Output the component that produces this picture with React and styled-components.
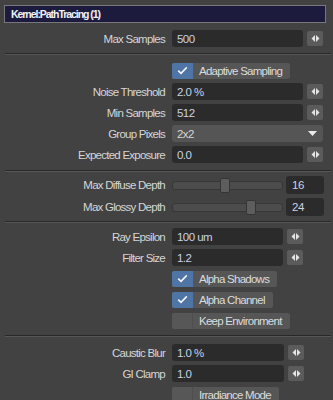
import React from "react";
import styled, { createGlobalStyle } from "styled-components";

const Global = createGlobalStyle`
  html, body { margin: 0; padding: 0; background: #424242; }
  body { font-family: "Liberation Sans", Arial, sans-serif; }
`;

const Panel = styled.div`
  width: 333px;
  height: 400px;
  overflow: hidden;
  box-sizing: border-box;
  padding: 5px 0 0 4px;
  background: #424242;
  display: flex;
  flex-direction: column;
`;

const Header = styled.div`
  width: 322px;
  height: 18px;
  flex: none;
  box-sizing: border-box;
  border: 1px solid #77777c;
  background: #1c1b3e;
  color: #f2f2f6;
  font-weight: bold;
  font-size: 10.5px;
  letter-spacing: -1.05px;
  display: flex;
  align-items: center;
  padding-left: 6px;
`;

const Section = styled.div`
  display: flex;
  flex-direction: column;
  flex: none;
  gap: ${(p) => p.$gap || 4}px;
  margin-top: ${(p) => p.$top || 0}px;
`;

const Separator = styled.div`
  width: 326px;
  flex: none;
  margin-left: 1px;
  height: 1px;
  background: #292929;
  border-bottom: 1px solid #565656;
  margin-top: ${(p) => p.$before}px;
  margin-bottom: ${(p) => p.$after}px;
`;

const Row = styled.div`
  display: grid;
  grid-template-columns: 161px auto;
  column-gap: 7px;
  align-items: center;
  height: ${(p) => p.$h || 17}px;
`;

const Label = styled.div`
  text-align: right;
  color: #d6d6d6;
  font-size: 11.5px;
  letter-spacing: -0.75px;
  white-space: nowrap;
`;

const Controls = styled.div`
  display: flex;
  align-items: center;
  gap: ${(p) => p.$gap || 4}px;
`;

const Field = styled.div`
  width: ${(p) => p.$w}px;
  height: 17px;
  box-sizing: border-box;
  background: #2b2b2b;
  border-radius: 3px;
  color: #c9d3e6;
  font-size: 11.5px;
  letter-spacing: -0.55px;
  display: flex;
  align-items: center;
  padding-left: 5px;
`;

const ArrowButton = styled.div`
  width: 16px;
  height: 15px;
  background: #5b5b5b;
  border-radius: 2px;
  display: flex;
  align-items: center;
  justify-content: center;
`;

const Dropdown = styled.div`
  width: 151px;
  height: 17px;
  box-sizing: border-box;
  background: #555555;
  border-radius: 3px;
  color: #d8d8d8;
  font-size: 11.5px;
  letter-spacing: -0.55px;
  display: flex;
  align-items: center;
  justify-content: space-between;
  padding: 0 6px 0 5px;
`;

const Track = styled.div`
  position: relative;
  width: 111px;
  height: 9px;
  box-sizing: border-box;
  background: #4c4c4c;
  border: 1px solid #373737;
  border-radius: 3px;
`;

const Handle = styled.div`
  position: absolute;
  top: -4px;
  width: 10px;
  height: 15px;
  box-sizing: border-box;
  background: #5d5d5d;
  border: 1px solid #353535;
  border-radius: 2px;
`;

const ValueBox = styled.div`
  width: 38px;
  height: 18px;
  box-sizing: border-box;
  background: #2b2b2b;
  border-radius: 3px;
  color: #c9d3e6;
  font-size: 11.5px;
  letter-spacing: -0.4px;
  display: flex;
  align-items: center;
  padding-left: 6px;
`;

const Check = styled.div`
  display: inline-flex;
  align-items: stretch;
  height: 16px;
  background: #565656;
  border-radius: 2px;
  overflow: hidden;
  justify-self: start;
`;

const CheckBox = styled.div`
  width: 20px;
  background: ${(p) => (p.$on ? "#4f74a6" : "#575757")};
  border-right: 1px solid ${(p) => (p.$on ? "#4f74a6" : "#4e4e4e")};
  display: flex;
  align-items: center;
  justify-content: center;
`;

const CheckText = styled.div`
  display: flex;
  align-items: center;
  color: #dcdcdc;
  font-size: 11.5px;
  letter-spacing: -0.75px;
  padding: 0 ${(p) => p.$pr}px 0 6px;
  white-space: nowrap;
`;

const Arrows = () => (
  <svg width="9" height="7" viewBox="0 0 9 7">
    <polygon points="4,0 4,7 0.5,3.5" fill="#e4e4e4" />
    <polygon points="5,0 5,7 8.5,3.5" fill="#e4e4e4" />
  </svg>
);

const Tick = () => (
  <svg width="11" height="9" viewBox="0 0 11 9">
    <polyline points="1.2,4.6 4,7.3 9.8,1.4" fill="none" stroke="#f4f6fa" strokeWidth="1.6" />
  </svg>
);

const Caret = () => (
  <svg width="9" height="5" viewBox="0 0 9 5">
    <polygon points="0,0 9,0 4.5,5" fill="#ececec" />
  </svg>
);

const NumRow = ({ label, value, w }) => (
  <Row>
    <Label>{label}</Label>
    <Controls>
      <Field $w={w}>{value}</Field>
      <ArrowButton>
        <Arrows />
      </ArrowButton>
    </Controls>
  </Row>
);

const CheckRow = ({ text, on, pr = 8 }) => (
  <Row>
    <span />
    <Check>
      <CheckBox $on={on}>{on && <Tick />}</CheckBox>
      <CheckText $pr={pr}>{text}</CheckText>
    </Check>
  </Row>
);

const SliderRow = ({ label, pos, value }) => (
  <Row $h={18}>
    <Label>{label}</Label>
    <Controls $gap={3}>
      <Track>
        <Handle style={{ left: pos }} />
      </Track>
      <ValueBox>{value}</ValueBox>
    </Controls>
  </Row>
);

export default function App() {
  return (
    <>
      <Global />
      <Panel>
        <Header>Kernel:PathTracing (1)</Header>
        <Section $top={7}>
          <NumRow label="Max Samples" value="500" w={131} />
        </Section>
        <Separator $before={6} $after={7} />
        <Section>
          <CheckRow text="Adaptive Sampling" on />
          <NumRow label="Noise Threshold" value="2.0 %" w={131} />
          <NumRow label="Min Samples" value="512" w={131} />
          <Row>
            <Label>Group Pixels</Label>
            <Dropdown>
              <span>2x2</span>
              <Caret />
            </Dropdown>
          </Row>
          <NumRow label="Expected Exposure" value="0.0" w={131} />
        </Section>
        <Separator $before={7} $after={4} />
        <Section>
          <SliderRow label="Max Diffuse Depth" pos={47} value="16" />
          <SliderRow label="Max Glossy Depth" pos={73} value="24" />
        </Section>
        <Separator $before={5} $after={5} />
        <Section>
          <NumRow label="Ray Epsilon" value="100 um" w={111} />
          <NumRow label="Filter Size" value="1.2" w={111} />
          <CheckRow text="Alpha Shadows" on />
          <CheckRow text="Alpha Channel" on />
          <CheckRow text="Keep Environment" />
        </Section>
        <Separator $before={6} $after={7} />
        <Section>
          <NumRow label="Caustic Blur" value="1.0 %" w={112} />
          <NumRow label="GI Clamp" value="1.0" w={112} />
          <CheckRow text="Irradiance Mode" />
        </Section>
      </Panel>
    </>
  );
}
